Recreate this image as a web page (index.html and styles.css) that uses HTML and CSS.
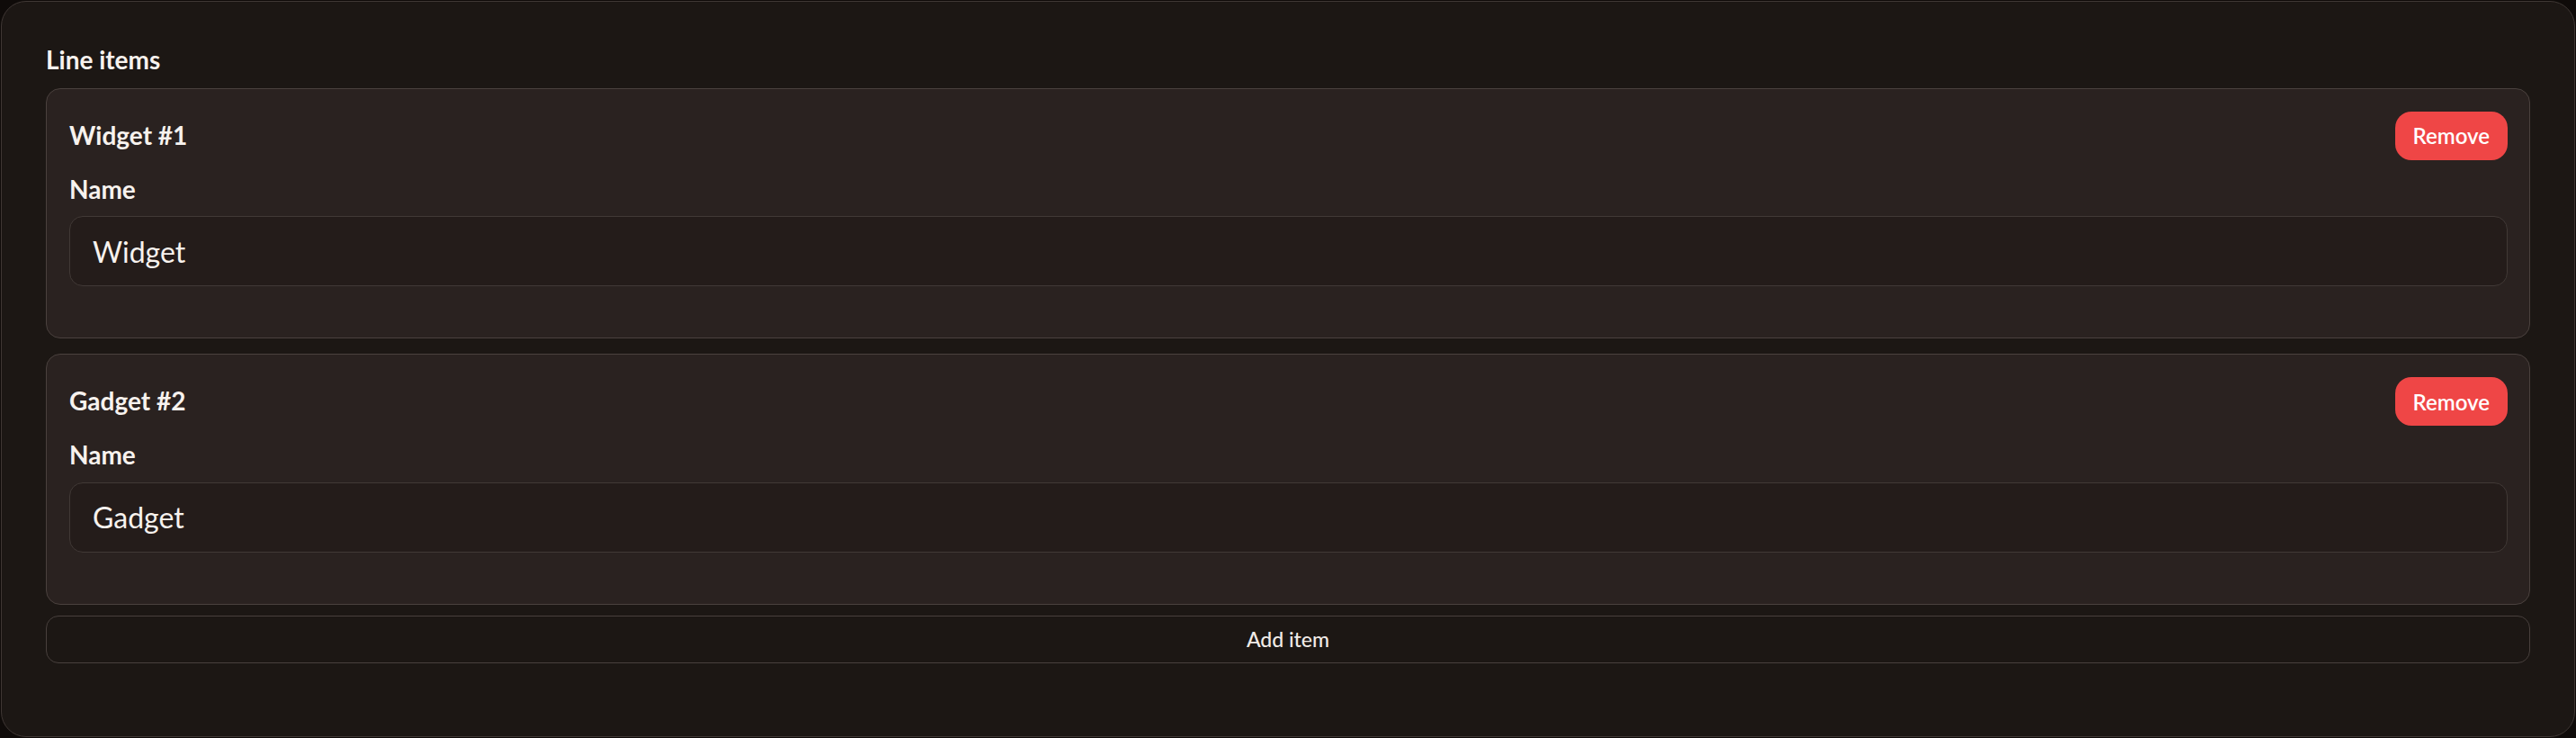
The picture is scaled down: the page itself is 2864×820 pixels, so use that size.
FILE: index.html
```html
<!DOCTYPE html>
<html lang="en">
<head>
<meta charset="utf-8">
<title>Line items</title>
<link rel="stylesheet" href="styles.css">
</head>
<body>
  <section class="panel">
    <h2 class="panel-title">Line items</h2>
    <div class="items">
      <div class="item-card">
        <div class="item-head">
          <h3 class="item-title">Widget #1</h3>
          <button class="btn-remove" type="button">Remove</button>
        </div>
        <label class="field-label" for="name-1">Name</label>
        <input class="field-input" id="name-1" type="text" value="Widget">
      </div>
      <div class="item-card">
        <div class="item-head">
          <h3 class="item-title">Gadget #2</h3>
          <button class="btn-remove" type="button">Remove</button>
        </div>
        <label class="field-label" for="name-2">Name</label>
        <input class="field-input" id="name-2" type="text" value="Gadget">
      </div>
    </div>
    <button class="btn-add" type="button">Add item</button>
  </section>
</body>
</html>
```
FILE: styles.css
```css
html, body {
  margin: 0;
  padding: 0;
  background: #0f0b09;
}

body {
  font-family: "Lato", "Noto Sans", sans-serif;
  color: #f7f2ee;
  padding: 1px 1px 0 1px;
}

.panel {
  box-sizing: border-box;
  height: 818px;
  background: #1c1714;
  border: 1px solid #3f3734;
  border-radius: 28px;
  padding: 48px 49px 0 49px;
}

.panel-title {
  margin: 0 0 14px 0;
  font-size: 28px;
  line-height: 1.2;
  font-weight: 700;
  color: #f7f2ee;
}

.items {
  display: flex;
  flex-direction: column;
  gap: 17px;
}

.item-card {
  background: #2a2220;
  border: 1px solid #4a413e;
  border-radius: 16px;
  padding: 25px 24px 57px 25px;
}

.item-head {
  display: flex;
  align-items: center;
  justify-content: space-between;
  height: 54px;
}

.item-title {
  margin: 0;
  font-size: 28px;
  line-height: 1.2;
  font-weight: 700;
  color: #f7f2ee;
}

.btn-remove {
  height: 54px;
  padding: 0 20px;
  min-width: 124px;
  border: none;
  border-radius: 18px;
  background: #ef4646;
  color: #ffffff;
  font-family: inherit;
  font-size: 24px;
  font-weight: 600;
  cursor: pointer;
}

.field-label {
  display: block;
  margin-top: 16px;
  font-size: 28px;
  line-height: 1.2;
  font-weight: 700;
  color: #f7f2ee;
}

.field-input {
  display: block;
  box-sizing: border-box;
  width: 100%;
  height: 78px;
  margin-top: 13px;
  padding: 0 25px;
  background: #241c1a;
  border: 1px solid #413936;
  border-radius: 15px;
  color: #f7f2ee;
  font-family: inherit;
  font-size: 32px;
  font-weight: 400;
  outline: none;
}

.btn-add {
  display: block;
  box-sizing: border-box;
  width: 100%;
  height: 53px;
  margin-top: 12px;
  background: #1c1714;
  border: 1px solid #48403d;
  border-radius: 14px;
  color: #f0ebe7;
  font-family: inherit;
  font-size: 23px;
  font-weight: 500;
  cursor: pointer;
}
```
